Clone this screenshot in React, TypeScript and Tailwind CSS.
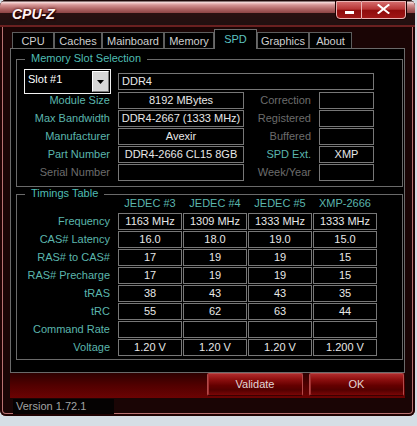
import React from "react";

function Legend({ children }: { children: React.ReactNode }) {
  return (
    <span className="absolute left-[8px] top-[-8px] bg-black px-[6px] text-[#4fbdb3] leading-[13px] whitespace-nowrap">
      {children}
    </span>
  );
}

function Field({ className = "", children }: { className?: string; children?: React.ReactNode }) {
  return (
    <div
      className={`h-[17px] shrink-0 border border-[#777777] bg-black text-[#e8e8e8] flex items-center leading-[13px] whitespace-nowrap ${className}`}
    >
      {children}
    </div>
  );
}

const slotRows = [
  { l: "Module Size", v: "8192 MBytes", rl: "Correction", rv: "", ld: false, rd: true },
  { l: "Max Bandwidth", v: "DDR4-2667 (1333 MHz)", rl: "Registered", rv: "", ld: false, rd: true },
  { l: "Manufacturer", v: "Avexir", rl: "Buffered", rv: "", ld: false, rd: true },
  { l: "Part Number", v: "DDR4-2666 CL15 8GB", rl: "SPD Ext.", rv: "XMP", ld: false, rd: false },
  { l: "Serial Number", v: "", rl: "Week/Year", rv: "", ld: true, rd: true },
];

const timingHeaders = ["JEDEC #3", "JEDEC #4", "JEDEC #5", "XMP-2666"];

const timingRows: { l: string; v: string[] }[] = [
  { l: "Frequency", v: ["1163 MHz", "1309 MHz", "1333 MHz", "1333 MHz"] },
  { l: "CAS# Latency", v: ["16.0", "18.0", "19.0", "15.0"] },
  { l: "RAS# to CAS#", v: ["17", "19", "19", "15"] },
  { l: "RAS# Precharge", v: ["17", "19", "19", "15"] },
  { l: "tRAS", v: ["38", "43", "43", "35"] },
  { l: "tRC", v: ["55", "62", "63", "44"] },
  { l: "Command Rate", v: ["", "", "", ""] },
  { l: "Voltage", v: ["1.20 V", "1.20 V", "1.20 V", "1.200 V"] },
];

const tabs = [
  { t: "CPU", w: "w-[42px]" },
  { t: "Caches", w: "w-[48px]" },
  { t: "Mainboard", w: "w-[62px]" },
  { t: "Memory", w: "w-[50px]" },
  { t: "SPD", w: "w-[43px]", sel: true },
  { t: "Graphics", w: "w-[52px]" },
  { t: "About", w: "w-[43px]" },
];

function RedButton({ className = "", children }: { className?: string; children: React.ReactNode }) {
  return (
    <div
      className={`h-[23px] flex items-center justify-center rounded-[2px] border border-[#b44a4a] border-b-[#3a0000] text-[#e2d6d6] bg-[linear-gradient(to_bottom,#b02a2a_0%,#8e1010_25%,#640000_55%,#520000_75%,#7a0606_100%)] shadow-[inset_1px_0_0_#a03030] ${className}`}
    >
      {children}
    </div>
  );
}

export default function App() {
  return (
    <div className="w-[417px] h-[426px] overflow-hidden bg-[#d5dee5] font-['Liberation_Sans',Arial,sans-serif] text-[11px] leading-[13px]">
      <div className="relative w-[415px] h-[416px] flex flex-col rounded-[6px] overflow-hidden bg-[#1a0505] shadow-[inset_0_0_0_2px_#1e0202,inset_0_0_0_3px_#b87272]">
        {/* Title bar */}
        <div className="h-[27px] shrink-0 flex justify-between bg-[linear-gradient(to_bottom,#1c0808_0px,#1c0808_1px,#f6e2e2_2px,#eec4c4_3px,#d49494_5px,#b06464_9px,#8c4444_13px,#2a1010_13px,#201010_25px,#6a2020_25px,#6a2020_27px)]">
          <div className="pl-[12px] pt-[6px] text-[14px] leading-[16px] font-bold italic text-[#fff4f4] [text-shadow:0_0_3px_#3a0000,1px_1px_1px_#200000]">
            CPU-Z
          </div>
          <div className="mr-[8px] h-[20px] flex border-x border-b border-[#1a0000] rounded-b-[5px] bg-[#1a0000] pt-[1px]">
            <div className="w-[26px] h-[18px] flex items-end justify-center pb-[4px] border border-[#e9b2b2] rounded-bl-[4px] bg-[linear-gradient(to_bottom,#d46a6a_0%,#b83434_45%,#8e0c0c_52%,#a01616_100%)]">
              <div className="w-[9px] h-[3px] bg-white ml-[1px]" />
            </div>
            <div className="w-[44px] h-[18px] flex items-center justify-center border border-l-0 border-[#e9b2b2] rounded-br-[4px] bg-[linear-gradient(to_bottom,#d46a6a_0%,#b83434_45%,#8e0c0c_52%,#a01616_100%)]">
              <svg width="13" height="10" viewBox="0 0 13 10" className="-mt-[2px]">
                <path d="M1.5 1 L11.5 9 M11.5 1 L1.5 9" stroke="white" strokeWidth="2" strokeLinecap="square" />
              </svg>
            </div>
          </div>
        </div>

        {/* Tabs */}
        <div className="h-[21px] shrink-0 flex items-end pl-[12px]">
          {tabs.map((tab) =>
            tab.sel ? (
              <div
                key={tab.t}
                className={`${tab.w} h-[20px] -mb-[1px] relative z-10 border border-b-0 border-[#6a6a6a] bg-black text-[#5cc4c0] flex justify-center pt-[3px]`}
              >
                {tab.t}
              </div>
            ) : (
              <div
                key={tab.t}
                className={`${tab.w} h-[16px] border border-b-0 border-[#5e5e5e] bg-black text-[#cfcfcf] flex justify-center pt-[2px]`}
              >
                {tab.t}
              </div>
            )
          )}
        </div>

        {/* Panel */}
        <div className="ml-[10px] w-[395px] h-[325px] shrink-0 border border-[#6a6a6a] bg-black">
          {/* Memory Slot Selection */}
          <div className="relative ml-[5px] mt-[10px] w-[387px] h-[128px] border border-[#6a6a6a] pt-[13px]">
            <Legend>Memory Slot Selection</Legend>
            <div className="flex h-[17px]">
              <div className="w-[93px] h-[17px] shrink-0">
                <div className="ml-[7px] -mt-[4px] w-[87px] h-[25px] border border-[#f2f2f2] bg-black p-[1px] flex">
                  <div className="flex-1 pl-[2px] pt-[2px] text-white">Slot #1</div>
                  <div className="w-[17px] h-[21px] flex items-center justify-center bg-[#d6d6d6] border border-t-white border-l-white border-r-[#7a7a7a] border-b-[#7a7a7a]">
                    <svg width="7" height="4" viewBox="0 0 7 4">
                      <polygon points="0,0 7,0 3.5,4" fill="black" />
                    </svg>
                  </div>
                </div>
              </div>
              <Field className="ml-[8px] w-[256px] justify-start pl-[3px]">DDR4</Field>
            </div>
            <div className="mt-[2px] flex flex-col gap-[1px]">
              {slotRows.map((r) => (
                <div key={r.l} className="flex h-[17px] items-center">
                  <div className={`w-[93px] shrink-0 text-right whitespace-nowrap ${r.ld ? "text-[#6c6c6c]" : "text-[#5bb6ad]"}`}>
                    {r.l}
                  </div>
                  <Field className="ml-[8px] w-[126px] justify-center">{r.v}</Field>
                  <div className={`w-[67px] shrink-0 text-right whitespace-nowrap ${r.rd ? "text-[#6c6c6c]" : "text-[#5bb6ad]"}`}>
                    {r.rl}
                  </div>
                  <Field className="ml-[8px] w-[55px] justify-center">{r.rv}</Field>
                </div>
              ))}
            </div>
          </div>

          {/* Timings Table */}
          <div className="relative ml-[5px] mt-[7px] w-[387px] h-[166px] border border-[#6a6a6a]">
            <Legend>Timings Table</Legend>
            <div className="flex h-[18px] pt-[2px]">
              <div className="w-[93px] shrink-0" />
              <div className="ml-[8px] flex gap-[1px]">
                {timingHeaders.map((h) => (
                  <div key={h} className="w-[64px] text-center text-[#5bb6ad] whitespace-nowrap">
                    {h}
                  </div>
                ))}
              </div>
            </div>
            <div className="flex flex-col gap-[1px]">
              {timingRows.map((r) => (
                <div key={r.l} className="flex h-[17px] items-center">
                  <div className="w-[93px] shrink-0 text-right text-[#5bb6ad] whitespace-nowrap">{r.l}</div>
                  <div className="ml-[8px] flex gap-[1px]">
                    {r.v.map((v, i) => (
                      <Field key={i} className="w-[64px] justify-center">
                        {v}
                      </Field>
                    ))}
                  </div>
                </div>
              ))}
            </div>
          </div>
        </div>

        {/* Button band */}
        <div className="mx-[10px] h-[25px] shrink-0 flex justify-end gap-[6px] pr-[1px] bg-[linear-gradient(to_bottom,#2e0000_0%,#520000_50%,#6c0303_100%)]">
          <RedButton className="w-[96px]">Validate</RedButton>
          <RedButton className="w-[95px]">OK</RedButton>
        </div>

        {/* Version */}
        <div className="flex-1 pl-[13px] pt-[1px]">
          <div className="w-[101px] h-[15px] bg-[#050202] pl-[3px] pt-[1px] text-[#a2a2a2]">Version 1.72.1</div>
        </div>
      </div>
    </div>
  );
}
